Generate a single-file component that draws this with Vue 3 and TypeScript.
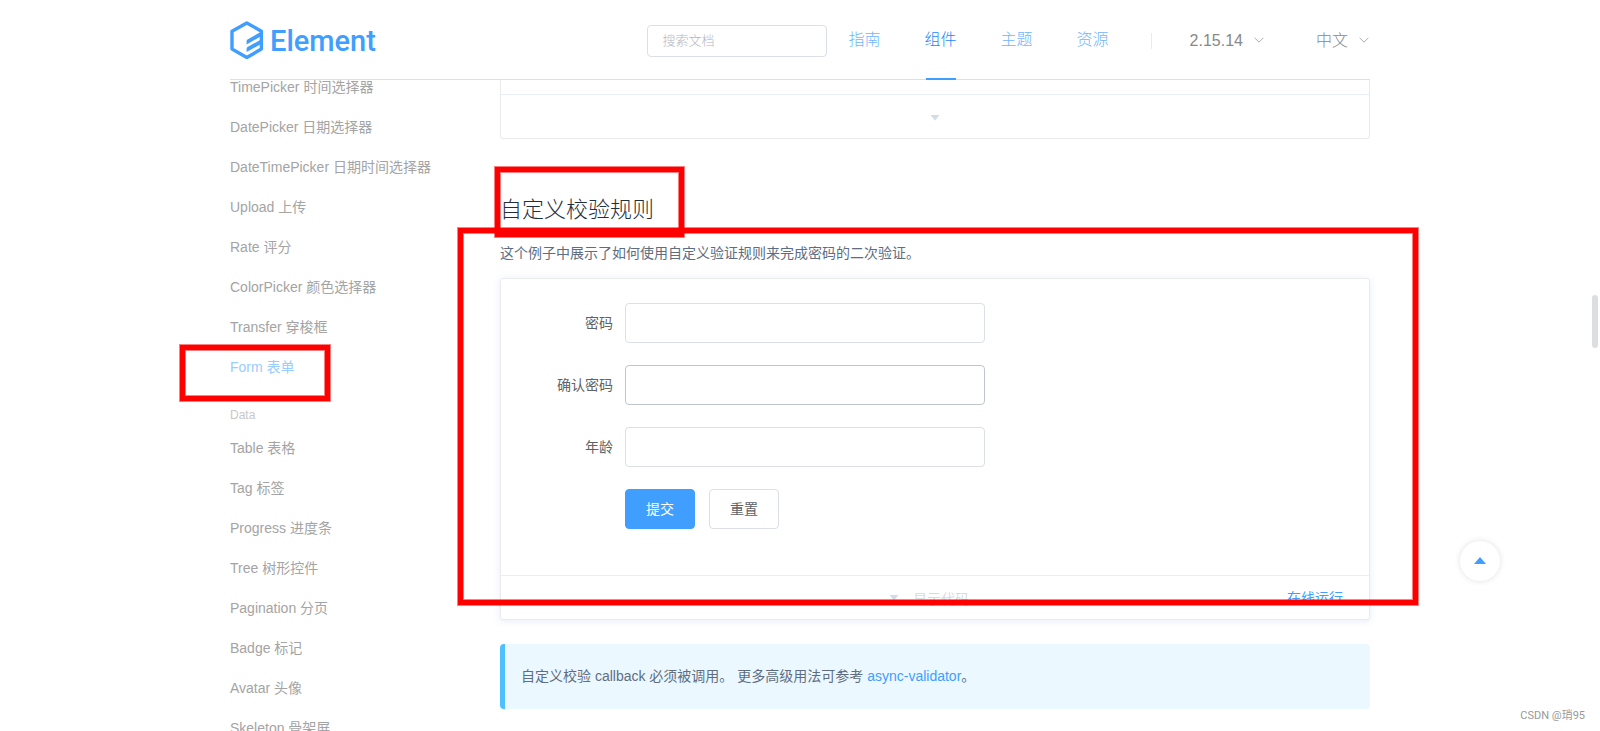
<script setup lang="ts">
import { ref } from 'vue'

interface NavLink {
  label: string
  active?: boolean
}

interface Field {
  id: string
  label: string
  type: string
  hovered?: boolean
}

const keyword = ref('')

const navLinks: NavLink[] = [
  { label: '指南' },
  { label: '组件', active: true },
  { label: '主题' },
  { label: '资源' },
]

const formGroup: string[] = [
  'TimePicker 时间选择器',
  'DatePicker 日期选择器',
  'DateTimePicker 日期时间选择器',
  'Upload 上传',
  'Rate 评分',
  'ColorPicker 颜色选择器',
  'Transfer 穿梭框',
  'Form 表单',
]

const dataGroup: string[] = [
  'Table 表格',
  'Tag 标签',
  'Progress 进度条',
  'Tree 树形控件',
  'Pagination 分页',
  'Badge 标记',
  'Avatar 头像',
  'Skeleton 骨架屏',
]

const fields: Field[] = [
  { id: 'pass', label: '密码', type: 'password' },
  { id: 'check-pass', label: '确认密码', type: 'password', hovered: true },
  { id: 'age', label: '年龄', type: 'text' },
]

const values = ref<Record<string, string>>({ pass: '', 'check-pass': '', age: '' })

function reset(): void {
  values.value = { pass: '', 'check-pass': '', age: '' }
}
</script>

<template>
  <div class="page">
    <header class="header">
      <div class="container header-inner">
        <a href="#" class="logo" aria-label="Element">
          <svg class="logo-mark" viewBox="0 0 34 40" aria-hidden="true">
            <path
              d="M16.8 2 31.4 10.2v17.9L16.8 36.4 2 28.1V10.2Z"
              fill="none"
              stroke="#409eff"
              stroke-width="3.4"
              stroke-linejoin="round"
            />
            <path d="M31.5 10.6v4.4L16.6 23.4v-3.5q0-1 .9-1.5Z" fill="#409eff" />
            <path d="M31.5 18.3v4.4L16.6 31.1v-3.5q0-1 .9-1.5Z" fill="#409eff" />
          </svg>
          <span class="logo-text">Element</span>
        </a>
        <input
          v-model="keyword"
          class="search"
          type="text"
          placeholder="搜索文档"
          aria-label="搜索文档"
        />
        <nav class="nav">
          <a
            v-for="link in navLinks"
            :key="link.label"
            href="#"
            class="nav-link"
            :class="{ active: link.active }"
            >{{ link.label }}</a
          >
        </nav>
        <span class="nav-divider"></span>
        <button type="button" class="dropdown version">
          2.15.14
          <svg class="chevron" viewBox="0 0 10 8" aria-hidden="true">
            <path d="M.6.8 5 5.2 9.4.8" fill="none" stroke="currentColor" />
          </svg>
        </button>
        <button type="button" class="dropdown lang">
          中文
          <svg class="chevron" viewBox="0 0 10 8" aria-hidden="true">
            <path d="M.6.8 5 5.2 9.4.8" fill="none" stroke="currentColor" />
          </svg>
        </button>
      </div>
    </header>

    <div class="viewport">
      <div class="container body">
        <aside class="sidebar">
          <ul class="menu">
            <li v-for="item in formGroup" :key="item">
              <a href="#" class="menu-link" :class="{ active: item === 'Form 表单' }">{{ item }}</a>
            </li>
          </ul>
          <div class="menu-title">Data</div>
          <ul class="menu">
            <li v-for="item in dataGroup" :key="item">
              <a href="#" class="menu-link">{{ item }}</a>
            </li>
          </ul>
        </aside>

        <main class="content">
          <section class="demo demo-previous">
            <div class="demo-source"></div>
            <button type="button" class="demo-control" aria-label="展开">
              <span class="caret"></span>
            </button>
          </section>

          <h3 class="title">自定义校验规则</h3>
          <p class="lead">这个例子中展示了如何使用自定义验证规则来完成密码的二次验证。</p>

          <section class="demo demo-hover">
            <form class="form" @submit.prevent>
              <div v-for="field in fields" :key="field.id" class="form-item">
                <label :for="field.id" class="form-label">{{ field.label }}</label>
                <input
                  :id="field.id"
                  v-model="values[field.id]"
                  :type="field.type"
                  class="form-input"
                  :class="{ hovered: field.hovered }"
                  autocomplete="off"
                />
              </div>
              <div class="form-item form-actions">
                <button type="submit" class="btn btn-primary">提交</button>
                <button type="button" class="btn" @click="reset">重置</button>
              </div>
            </form>
            <div class="demo-footer">
              <button type="button" class="demo-control toggle">
                <span class="caret"></span>
                <span>显示代码</span>
              </button>
              <a href="#" class="run">在线运行</a>
            </div>
          </section>

          <p class="tip">
            自定义校验 callback 必须被调用。 更多高级用法可参考
            <a href="#">async-validator</a>。
          </p>
        </main>
      </div>
    </div>

    <div class="container marks">
      <span class="mark mark-menu"></span>
      <span class="mark mark-title"></span>
      <span class="mark mark-demo"></span>
    </div>

    <button type="button" class="backtop" aria-label="回到顶部">
      <svg viewBox="0 0 12 7" width="12" height="7" aria-hidden="true">
        <path d="M6 0 12 7H0Z" fill="#409eff" />
      </svg>
    </button>
    <span class="scroll-thumb"></span>
    <span class="watermark">CSDN @琑95</span>
  </div>
</template>

<style>
body {
  margin: 0;
  overflow: hidden;
  background: #fff;
}
</style>

<style scoped>
.page {
  position: relative;
  display: flex;
  flex-direction: column;
  height: 100vh;
  overflow: hidden;
  font-family: 'Liberation Sans', 'Noto Sans CJK SC', sans-serif;
  font-size: 14px;
  font-weight: 400;
  color: #606266;
}

.page *,
.page *::before,
.page *::after {
  box-sizing: border-box;
}

a {
  text-decoration: none;
}

button,
input {
  font: inherit;
}

.container {
  width: 100%;
  max-width: 1140px;
  margin: 0 auto;
}

/* Header */
.header {
  flex: none;
  background: #fff;
  font-weight: 300;
}

.header-inner {
  display: flex;
  align-items: center;
  height: 80px;
  padding-top: 2px;
  border-bottom: 1px solid #dcdfe6;
}

.logo {
  display: flex;
  align-items: center;
  gap: 6px;
  margin-right: auto;
  color: #409eff;
}

.logo-mark {
  width: 34px;
  height: 40px;
}

.logo-text {
  font-family: Roboto, sans-serif;
  font-size: 29px;
  font-weight: 500;
  line-height: 40px;
}

.search {
  width: 180px;
  height: 32px;
  padding: 0 15px;
  border: 1px solid #dcdfe6;
  border-radius: 4px;
  background: #fff;
  font-size: 13px;
  color: #606266;
  outline: none;
}

.search::placeholder {
  color: #b4b8c0;
  opacity: 1;
}

.nav {
  display: flex;
  align-self: stretch;
}

.nav-link {
  position: relative;
  padding: 0 22px;
  font-size: 16px;
  line-height: 76px;
  color: #6fb5ff;
}

.nav-link.active {
  color: #1989fa;
}

.nav-link.active::after {
  content: '';
  position: absolute;
  left: 23px;
  right: 23px;
  bottom: -1px;
  height: 2px;
  background: #409eff;
}

.nav-divider {
  width: 1px;
  height: 16px;
  margin: 0 38px 0 20px;
  background: #ebebeb;
}

.dropdown {
  display: flex;
  align-items: center;
  gap: 11px;
  padding: 0 1px 0 0;
  border: 0;
  background: none;
  font-size: 16px;
  line-height: 24px;
  color: #888;
}

.lang {
  margin-left: 51px;
}

.chevron {
  width: 10px;
  height: 8px;
  color: #aaa;
}

/* Page body, scrolled under the header */
.viewport {
  flex: 1;
  min-height: 0;
  overflow: hidden;
}

.body {
  display: grid;
  grid-template-columns: 240px minmax(0, 1fr);
  column-gap: 30px;
}

.sidebar {
  margin-top: -13px;
}

.menu {
  margin: 0;
  padding: 0;
  list-style: none;
}

.menu-link {
  display: block;
  height: 40px;
  line-height: 40px;
  white-space: nowrap;
  color: #a4a4a4;
}

.menu-link.active {
  color: #9accff;
}

.menu-title {
  padding-top: 15px;
  font-size: 12px;
  line-height: 26px;
  color: #c8c8c8;
}

/* Content */
.demo {
  border: 1px solid #ebebeb;
  border-radius: 3px;
}

.demo-previous {
  border-top: 0;
  border-top-left-radius: 0;
  border-top-right-radius: 0;
}

.demo-source {
  height: 14px;
}

.demo-hover {
  box-shadow: 0 0 8px 0 rgba(232, 237, 250, 0.6), 0 2px 4px 0 rgba(232, 237, 250, 0.5);
}

.demo-control {
  display: flex;
  align-items: center;
  justify-content: center;
  gap: 14px;
  width: 100%;
  height: 44px;
  padding: 2px 0 0;
  border: 0;
  border-top: 1px solid #eaeefb;
  background: none;
  color: #d3dce6;
}

.demo-footer {
  position: relative;
}

.toggle {
  padding: 0 12px 0 0;
}

.caret {
  width: 10px;
  height: 6px;
  background: #d3dce6;
  clip-path: polygon(0 0, 100% 0, 50% 100%);
}

.run {
  position: absolute;
  top: 1px;
  right: 26px;
  line-height: 44px;
  color: #409eff;
}

.title {
  margin: 55px 0 18px;
  font-size: 22px;
  font-weight: 300;
  line-height: 32px;
  color: #1f2f3d;
}

.lead {
  margin: 0 0 16px;
  line-height: 18px;
  color: #5e6d82;
}

.form {
  padding: 24px;
}

.form-item {
  display: flex;
  align-items: center;
  height: 40px;
  margin-bottom: 22px;
}

.form-label {
  width: 100px;
  padding-right: 12px;
  line-height: 40px;
  text-align: right;
  color: #606266;
}

.form-input {
  width: 360px;
  height: 40px;
  padding: 0 15px;
  border: 1px solid #dcdfe6;
  border-radius: 4px;
  background: #fff;
  color: #606266;
  outline: none;
}

.form-input.hovered {
  border-color: #c0c4cc;
}

.form-actions {
  gap: 14px;
  padding-left: 100px;
}

.btn {
  height: 40px;
  padding: 0 20px 2px;
  border: 1px solid #dcdfe6;
  border-radius: 4px;
  background: #fff;
  color: #606266;
}

.btn-primary {
  border-color: #409eff;
  background: #409eff;
  color: #fff;
}

.tip {
  margin: 24px 0 0;
  padding: 20px 16px;
  border-left: 5px solid #50bfff;
  border-radius: 4px;
  background: #ecf8ff;
  line-height: 25px;
  color: #5e6d82;
}

.tip a {
  color: #409eff;
}

/* Red annotation frames laid over the page */
.marks {
  position: absolute;
  top: 0;
  left: 0;
  right: 0;
  height: 0;
  pointer-events: none;
}

.mark {
  position: absolute;
  border: 5px solid #f00;
  box-shadow: 0 0 0 1px rgba(255, 0, 0, 0.5), inset 0 0 0 1px rgba(255, 0, 0, 0.5);
}

.mark-menu {
  top: 345px;
  left: -50px;
  width: 150px;
  height: 56px;
}

.mark-title {
  top: 167px;
  left: 265px;
  width: 189px;
  height: 70px;
}

.mark-demo {
  top: 228px;
  left: 228px;
  right: -48px;
  height: 377px;
}

/* Floating items */
.backtop {
  position: absolute;
  right: 100px;
  bottom: 150px;
  display: flex;
  align-items: center;
  justify-content: center;
  width: 40px;
  height: 40px;
  padding: 0 0 2px;
  border: 0;
  border-radius: 50%;
  background: #fff;
  box-shadow: 0 0 6px rgba(0, 0, 0, 0.12);
}

.scroll-thumb {
  position: absolute;
  top: 295px;
  right: 2px;
  width: 6px;
  height: 53px;
  border-radius: 3px;
  background: #dddee0;
}

.watermark {
  position: absolute;
  right: 15px;
  bottom: 6px;
  font-family: Roboto, 'Noto Sans CJK SC', sans-serif;
  font-size: 11px;
  line-height: 18px;
  color: #999;
}
</style>
